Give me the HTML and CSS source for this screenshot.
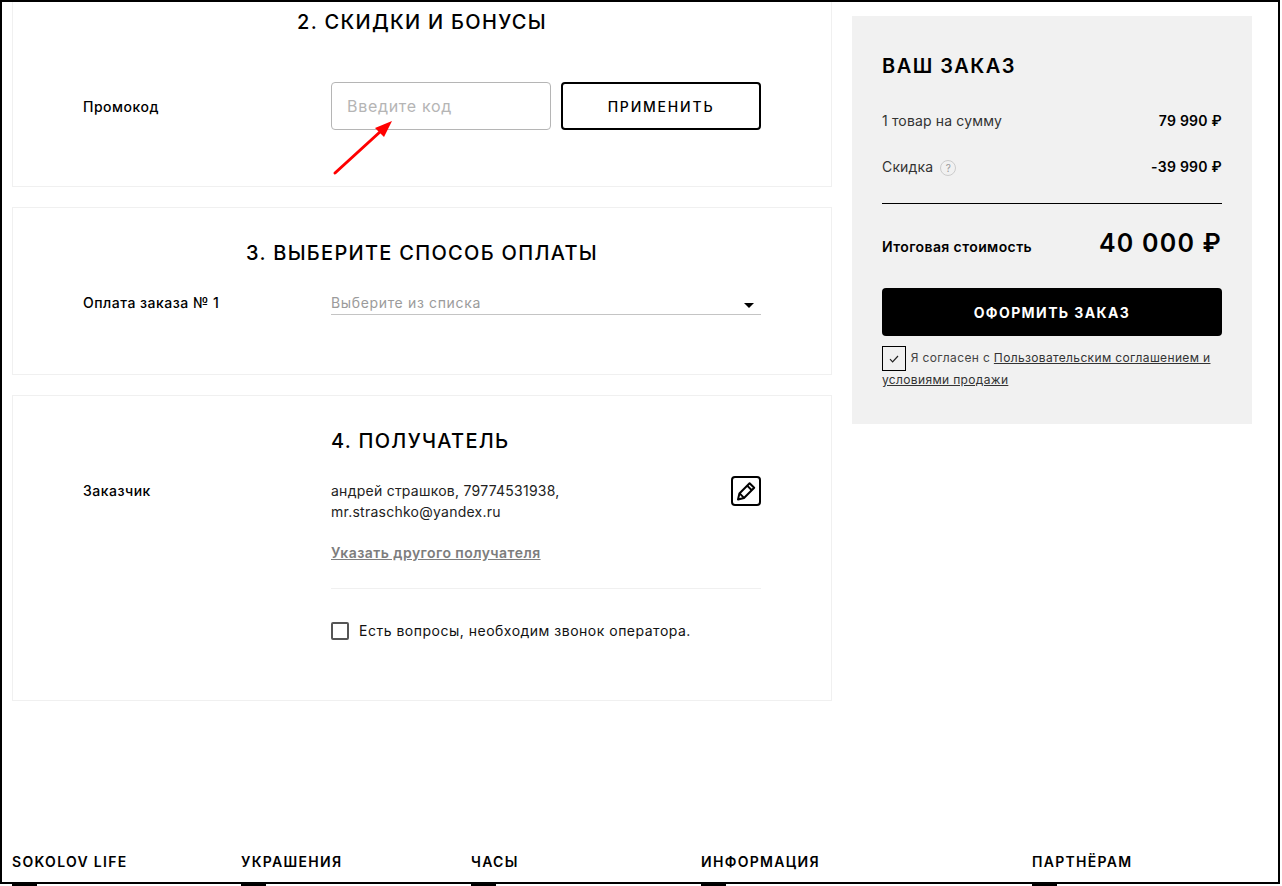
FILE: index.html
```html
<!DOCTYPE html>
<html lang="ru">
<head>
  <meta charset="UTF-8" />
  <meta name="viewport" content="width=device-width, initial-scale=1.0"/>
  <title>Оформление заказа</title>
  <link rel="stylesheet" href="styles.css">
</head>
<body>

  <div class="frame">
    <div class="checkout">
      <div class="steps">

        <div class="card card-promo">
          <h2 class="step-title">2. СКИДКИ И БОНУСЫ</h2>
          <div class="row row-promo">
            <div class="label">Промокод</div>
            <div class="promo-controls">
              <input class="promo-input" type="text" placeholder="Введите код" />
              <button class="promo-btn" type="button">ПРИМЕНИТЬ</button>
            </div>
          </div>
        </div>

        <div class="card card-pay">
          <h2 class="step-title">3. ВЫБЕРИТЕ СПОСОБ ОПЛАТЫ</h2>
          <div class="row">
            <div class="label">Оплата заказа № 1</div>
            <div class="select">
              <span>Выберите из списка</span>
              <span class="caret"></span>
            </div>
          </div>
        </div>

        <div class="card card-person">
          <div class="row">
            <div></div>
            <h2 class="step-title step-title-left">4. ПОЛУЧАТЕЛЬ</h2>
          </div>
          <div class="row row-person">
            <div class="label">Заказчик</div>
            <div>
              <div class="person-head">
                <div class="person-text">андрей страшков, 79774531938,<br>mr.straschko@yandex.ru</div>
                <div class="edit-btn">
                  <svg width="22" height="22" viewBox="0 0 22 22" fill="none" stroke="#000" stroke-width="2" stroke-linejoin="round">
                    <path d="M3 19.5l1.4-6L14.6 3.2l4.6 4.6L9 18z"/>
                    <path d="M12.2 5.6l4.6 4.6"/>
                    <path d="M4.6 13.4l4.2 4.2"/>
                  </svg>
                </div>
              </div>
              <a class="other-link" href="#">Указать другого получателя</a>
              <div class="divider"></div>
              <label class="call-check">
                <span class="box"></span>
                Есть вопросы, необходим звонок оператора.
              </label>
            </div>
          </div>
        </div>

      </div>

      <div class="summary">
        <h3 class="summary-title">ВАШ ЗАКАЗ</h3>
        <div class="sum-row">
          <span>1 товар на сумму</span>
          <b>79 990 ₽</b>
        </div>
        <div class="sum-row sum-row-discount">
          <span>Скидка <span class="hint">?</span></span>
          <b>-39 990 ₽</b>
        </div>
        <div class="total">
          <b class="total-label">Итоговая стоимость</b>
          <b class="total-price">40 000 ₽</b>
        </div>
        <button class="order-btn" type="button">ОФОРМИТЬ ЗАКАЗ</button>
        <div class="agree">
          <span class="agree-box">
            <svg width="10" height="8" viewBox="0 0 10 8" fill="none" stroke="#222" stroke-width="1.2"><path d="M1 4.2l2.6 2.6L9 1"/></svg>
          </span>
          Я согласен с <a href="#">Пользовательским соглашением и условиями продажи</a>
        </div>
      </div>
    </div>

    <div class="footer">
      <div class="footer-col">SOKOLOV LIFE</div>
      <div class="footer-col">УКРАШЕНИЯ</div>
      <div class="footer-col">ЧАСЫ</div>
      <div class="footer-col">ИНФОРМАЦИЯ</div>
      <div class="footer-col">ПАРТНЁРАМ</div>
    </div>

    <svg class="arrow" width="64" height="60" viewBox="0 0 64 60">
      <path d="M3 55L49 13" stroke="#f00" stroke-width="3" stroke-linecap="round"/>
      <path d="M60 3L52 19L43 10z" fill="#f00"/>
    </svg>
  </div>

  <div class="footer-marks">
    <span></span><span></span><span></span><span></span><span></span>
  </div>

</body>
</html>
```

FILE: styles.css
```css
* {
  box-sizing: border-box;
}

html, body {
  height: 886px;
  overflow: hidden;
}

body {
  margin: 0;
  font-family: Inter, "Noto Sans", sans-serif;
  color: #000;
  background: #fff;
}

.frame {
  position: relative;
  width: 1280px;
  height: 884px;
  border: 2px solid #000;
  overflow: hidden;
  padding: 0 10px;
}

.checkout {
  display: flex;
  gap: 20px;
  align-items: flex-start;
  height: 836px;
}

.steps {
  width: 820px;
  flex-shrink: 0;
  display: flex;
  flex-direction: column;
  gap: 20px;
  margin-top: -20px;
}

.card {
  border: 1px solid #f0f0f0;
  padding: 0 70px;
}

.card-promo {
  height: 205px;
  padding-top: 25px;
}

.card-pay {
  height: 168px;
  padding-top: 31px;
}

.card-person {
  height: 306px;
  padding-top: 31px;
}

.step-title {
  margin: 0;
  font-size: 20px;
  line-height: 28px;
  font-weight: 500;
  letter-spacing: 1.3px;
  text-align: center;
}

.step-title-left {
  text-align: left;
}

.row {
  display: grid;
  grid-template-columns: 248px 430px;
  margin-top: 25px;
}

.card-person .row:first-child {
  margin-top: 0;
}

.row-promo {
  margin-top: 46px;
  align-items: center;
}

.row-person {
  margin-top: 25px;
}

.label {
  margin-top: 1px;
  font-size: 14px;
  line-height: 20px;
  font-weight: 500;
  letter-spacing: 0.5px;
}

.promo-controls {
  display: flex;
  gap: 10px;
}

.promo-input {
  width: 220px;
  height: 48px;
  padding: 0 15px;
  border: 1px solid #b5b5b5;
  border-radius: 4px;
  font-family: inherit;
  font-size: 16px;
  letter-spacing: 0.7px;
}

.promo-input::placeholder {
  color: #b5b5b5;
  opacity: 1;
}

.promo-btn {
  width: 200px;
  height: 48px;
  background: #fff;
  border: 2px solid #000;
  border-radius: 4px;
  font-family: inherit;
  font-size: 14px;
  font-weight: 500;
  letter-spacing: 1.8px;
  color: #000;
}

.select {
  display: flex;
  justify-content: space-between;
  align-items: center;
  height: 23px;
  border-bottom: 1px solid #c4c4c4;
  padding: 0 7px 2px 0;
  font-size: 14px;
  letter-spacing: 0.65px;
  color: #9b9b9b;
}

.caret {
  width: 0;
  height: 0;
  margin-top: 7px;
  border-left: 5px solid transparent;
  border-right: 5px solid transparent;
  border-top: 5px solid #000;
}

.person-head {
  display: flex;
  justify-content: space-between;
  align-items: flex-start;
}

.person-text {
  font-size: 14px;
  line-height: 21px;
  letter-spacing: 0.25px;
  color: #222;
}

.edit-btn {
  display: flex;
  align-items: center;
  justify-content: center;
  width: 30px;
  height: 30px;
  margin-top: -4px;
  border: 2px solid #000;
  border-radius: 4px;
}

.other-link {
  display: block;
  margin-top: 21px;
  font-size: 14px;
  line-height: 20px;
  font-weight: 600;
  letter-spacing: 0.45px;
  color: #7d7d7d;
}

.divider {
  height: 1px;
  margin-top: 25px;
  background: #f0f0f0;
}

.call-check {
  display: flex;
  align-items: center;
  gap: 10px;
  margin-top: 33px;
  font-size: 14px;
  line-height: 18px;
  letter-spacing: 0.5px;
  color: #111;
}

.box {
  width: 18px;
  height: 18px;
  border: 2px solid #555;
  border-radius: 2px;
}

.summary {
  width: 400px;
  height: 408px;
  flex-shrink: 0;
  margin-top: 14px;
  padding: 36px 30px 0;
  background: #f1f1f1;
}

.summary-title {
  margin: 0;
  font-size: 20px;
  line-height: 28px;
  font-weight: 600;
  letter-spacing: 1.45px;
}

.sum-row {
  display: flex;
  justify-content: space-between;
  align-items: center;
  margin-top: 31px;
  font-size: 14px;
  line-height: 20px;
  letter-spacing: 0.15px;
  color: #333;
}

.sum-row b {
  font-weight: 600;
  letter-spacing: 0.25px;
  color: #000;
}

.sum-row-discount {
  margin-top: 26px;
}

.hint {
  display: inline-flex;
  align-items: center;
  justify-content: center;
  width: 16px;
  height: 16px;
  margin-left: 3px;
  border: 1px solid #ccc;
  border-radius: 50%;
  font-size: 10px;
  color: #999;
}

.total {
  display: flex;
  justify-content: space-between;
  align-items: center;
  margin-top: 26px;
  padding-top: 25px;
  border-top: 1px solid #000;
}

.total-label {
  margin-top: 4px;
  font-size: 14px;
  font-weight: 600;
  letter-spacing: 0.4px;
}

.total-price {
  margin-top: -2px;
  font-size: 25px;
  line-height: 32px;
  font-weight: 600;
  letter-spacing: 1.2px;
}

.order-btn {
  display: block;
  width: 100%;
  height: 48px;
  margin-top: 29px;
  background: #000;
  border: none;
  border-radius: 4px;
  color: #fff;
  font-family: inherit;
  font-size: 14px;
  font-weight: 700;
  letter-spacing: 1.4px;
}

.agree {
  margin-top: 11px;
  font-size: 12px;
  line-height: 22px;
  letter-spacing: 0.35px;
  color: #444;
}

.agree a {
  color: #333;
}

.agree-box {
  display: inline-flex;
  align-items: center;
  justify-content: center;
  width: 24px;
  height: 25px;
  margin: -3px 1px -3px 0;
  border: 1px solid #000;
  vertical-align: middle;
}

.footer {
  display: grid;
  grid-template-columns: 229px 230px 230px 331px 1fr;
  padding-top: 14px;
  font-size: 14px;
  line-height: 20px;
  font-weight: 600;
  letter-spacing: 1.3px;
}

.arrow {
  position: absolute;
  left: 330px;
  top: 116px;
}

.footer-marks {
  display: grid;
  grid-template-columns: 229px 230px 230px 331px 1fr;
  padding-left: 12px;
  height: 2px;
}

.footer-marks span {
  width: 25px;
  height: 2px;
  background: #000;
}
```
